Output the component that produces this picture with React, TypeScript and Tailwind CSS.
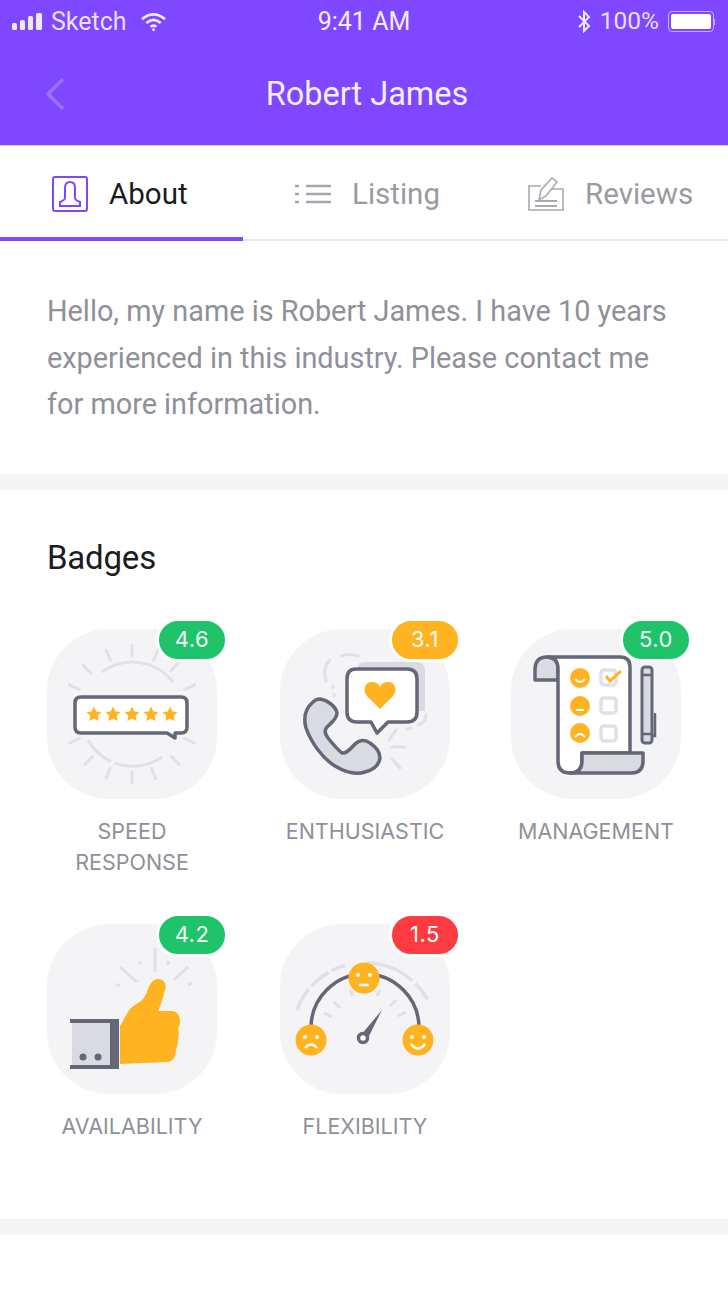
import { ReactNode } from 'react';

const DARK = '#646876';
const LIGHT = '#e0e1e7';
const FILL = '#d9dae2';
const ORANGE = '#ffb320';

const Rays = ({ angles }: { angles: number[] }) => (
  <>
    {angles.map(a => {
      const r = (a * Math.PI) / 180;
      return (
        <line
          key={a}
          x1={85 + Math.cos(r) * 58}
          y1={85 + Math.sin(r) * 58}
          x2={85 + Math.cos(r) * 69}
          y2={85 + Math.sin(r) * 69}
          stroke={LIGHT}
          strokeWidth="3"
          strokeLinecap="round"
        />
      );
    })}
  </>
);

const Star = ({ x }: { x: number }) => (
  <path
    transform={`translate(${x} 85)`}
    d="M0 -7.5 L2.3 -2.6 L7.5 -1.9 L3.7 1.8 L4.6 7 L0 4.5 L-4.6 7 L-3.7 1.8 L-7.5 -1.9 L-2.3 -2.6 Z"
    fill={ORANGE}
  />
);

const SpeedIcon = () => (
  <svg viewBox="0 0 170 170" className="w-full h-full">
    <path d="M55 43 A51.5 51.5 0 0 1 126 53" fill="none" stroke={LIGHT} strokeWidth="3" />
    <path d="M41 111 A51 51 0 0 0 115 128" fill="none" stroke={LIGHT} strokeWidth="3" strokeDasharray="32 4 80" />
    <Rays angles={[-90, -112, -135, -155, -25, -48, -68, 25, 47, 70, 90, 112, 133, 155]} />
    <path
      d="M34 68 H134 Q140 68 140 74 V98 Q140 104 134 104 H128 V109 L120 104 H34 Q28 104 28 98 V74 Q28 68 34 68 Z"
      fill="#fff"
      stroke={DARK}
      strokeWidth="3.5"
      strokeLinejoin="round"
    />
    {[47, 66, 85, 104, 123].map(x => (
      <Star key={x} x={x} />
    ))}
  </svg>
);

const CallIcon = () => (
  <svg viewBox="0 0 170 170" className="w-full h-full">
    <path d="M46 52 Q42 38 50 31 M62 27 Q70 24 78 27" fill="none" stroke={LIGHT} strokeWidth="3" strokeLinecap="round" />
    <path d="M53 56 V60 M54 64 V68" fill="none" stroke={LIGHT} strokeWidth="3" />
    <path d="M84 33 H136 Q145 33 145 42 V82 H78 V39 Q78 33 84 33 Z" fill={FILL} />
    <path d="M146 85 Q146 94 138 96 M131 99 L127 100" fill="none" stroke={LIGHT} strokeWidth="3" strokeLinecap="round" />
    <path d="M116 101 L109 111 M112 118 H125 M112 130 L120 139" fill="none" stroke={LIGHT} strokeWidth="3" strokeLinecap="round" />
    <path
      d="M76 40 H127 Q137 40 137 50 V83 Q137 93 127 93 H108 L97 104 L91 93 H77 Q67 93 67 83 V50 Q67 40 76 40 Z"
      fill="#fff"
      stroke={DARK}
      strokeWidth="3.5"
      strokeLinejoin="round"
    />
    <path
      d="M100 80 L87 67 C82 61 85 53 92 53 C96 53 99 55 100 58 C101 55 104 53 108 53 C115 53 118 61 113 67 Z"
      fill={ORANGE}
    />
    <path
      d="M40 70 C48 71 56 78 57 84 C57 90 51 94 47 98 C44 101 45 105 48 109 C52 114 57 120 62 124 C66 125 70 120 75 115 C79 111 85 110 90 114 C96 118 100 124 100 129 C99 136 93 141 85 143 C76 146 65 143 55 137 C42 129 31 113 26 99 C23 88 26 79 33 73 C35 71 38 70 40 70 Z"
      fill={FILL}
      stroke={DARK}
      strokeWidth="3.5"
      strokeLinejoin="round"
    />
  </svg>
);

const Box = ({ y }: { y: number }) => (
  <rect x="90" y={y - 7} width="15" height="15" rx="3" fill="none" stroke={LIGHT} strokeWidth="3.5" />
);

const ManagementIcon = () => (
  <svg viewBox="0 0 170 170" className="w-full h-full">
    <path d="M47 51 H24 V41 Q24 28 36 28 Q47 28 47 40 Z" fill={FILL} stroke={DARK} strokeWidth="3.5" strokeLinejoin="round" />
    <path d="M36 28 H109 Q119 28 119 38 V124 H71 V132 Q71 144 59 144 Q47 144 47 132 V40 Q47 28 36 28 Z" fill="#fff" stroke={DARK} strokeWidth="3.5" strokeLinejoin="round" />
    <path d="M71 124 H132 V132 Q132 144 120 144 H59 Q71 144 71 132 Z" fill={FILL} stroke={DARK} strokeWidth="3.5" strokeLinejoin="round" />
    <circle cx="69" cy="49" r="10" fill={ORANGE} />
    <circle cx="69" cy="77" r="10" fill={ORANGE} />
    <circle cx="69" cy="104" r="10" fill={ORANGE} />
    <path d="M64 50 Q69 56 74 50" fill="none" stroke="#fff" strokeWidth="2" />
    <path d="M65 81 H73" fill="none" stroke="#fff" strokeWidth="2" />
    <path d="M64 108 Q69 102 74 108" fill="none" stroke="#fff" strokeWidth="2" />
    <Box y={48} />
    <Box y={76} />
    <Box y={104} />
    <path d="M95 47 L99 52 L110 42" fill="none" stroke={ORANGE} strokeWidth="3" />
    <rect x="131" y="38" width="10" height="76" rx="3" fill={FILL} stroke={DARK} strokeWidth="3" />
    <path d="M131 46 H141 M131 105 H141 M144 84 V107 H141" fill="none" stroke={DARK} strokeWidth="2.5" />
  </svg>
);

const ThumbIcon = () => (
  <svg viewBox="0 0 170 170" className="w-full h-full">
    <path d="M108 24 V48 M73 43 L90 58 M127 56 L141 43" stroke={LIGHT} strokeWidth="3" fill="none" />
    <path d="M93 37 V41 M122 37 L120 41 M69 60 L73 62 M145 59 L141 61" stroke={LIGHT} strokeWidth="3" fill="none" />
    <rect x="25" y="97" width="46" height="46" fill={FILL} />
    <path d="M23 97 H68 M23 143 H71" stroke={DARK} strokeWidth="4" fill="none" />
    <rect x="63" y="95" width="9" height="50" fill={DARK} />
    <circle cx="36" cy="133" r="3.5" fill={DARK} />
    <circle cx="51" cy="133" r="3.5" fill={DARK} />
    <path
      d="M73 102 C78 94 81 86 86 82 C94 78 97 75 100 68 C102 62 105 55 111 55 C117 55 120 60 118 66 C116 74 114 80 111 87 H125 C130 87 133 92 133 97 C133 100 132 103 131 105 C132 108 132 112 131 114 C131 118 131 122 129 125 C129 131 127 138 120 138 L73 140 Z"
      fill={ORANGE}
    />
  </svg>
);

const FlexFace = ({ cx, cy, mouth }: { cx: number; cy: number; mouth: string }) => (
  <g>
    <circle cx={cx} cy={cy} r="15.5" fill={ORANGE} />
    <circle cx={cx - 6} cy={cy - 3} r="2" fill="#fff" />
    <circle cx={cx + 6} cy={cy - 3} r="2" fill="#fff" />
    <path d={mouth} fill="none" stroke="#fff" strokeWidth="2.5" />
  </g>
);

const FlexibilityIcon = () => (
  <svg viewBox="0 0 170 170" className="w-full h-full">
    <path d="M17 86 A72 72 0 0 1 153 88" fill="none" stroke={LIGHT} strokeWidth="3.5" strokeDasharray="24 4 22 4 14 22 50 4 20" />
    <path d="M44 89 L52 93 M54 78 L60 84 M70 66 L73 72 M100 66 L97 72 M116 76 L110 82 M126 88 L118 92" stroke={LIGHT} strokeWidth="3" fill="none" />
    <path d="M31 104 A54 54 0 0 1 139 104" fill="none" stroke={DARK} strokeWidth="3.5" />
    <FlexFace cx={84} cy={54} mouth="M79 61 H89" />
    <FlexFace cx={31} cy={116} mouth="M25 124 Q31 117 37 124" />
    <FlexFace cx={138} cy={116} mouth="M131 120 Q138 129 145 120" />
    <path d="M81 111 L102 86 L87 116 Z" fill={DARK} />
    <circle cx="83" cy="114" r="4.5" fill="#fff" stroke={DARK} strokeWidth="3.5" />
  </svg>
);

const badges: { label: ReactNode; score: string; color: string; icon: ReactNode }[] = [
  { label: <>SPEED<br />RESPONSE</>, score: '4.6', color: 'bg-[#1fc36a]', icon: <SpeedIcon /> },
  { label: 'ENTHUSIASTIC', score: '3.1', color: 'bg-[#ffb320]', icon: <CallIcon /> },
  { label: 'MANAGEMENT', score: '5.0', color: 'bg-[#1fc36a]', icon: <ManagementIcon /> },
  { label: 'AVAILABILITY', score: '4.2', color: 'bg-[#1fc36a]', icon: <ThumbIcon /> },
  { label: 'FLEXIBILITY', score: '1.5', color: 'bg-[#ff3b42]', icon: <FlexibilityIcon /> },
];

const StatusBar = () => (
  <div className="grid grid-cols-3 items-center h-[43px] pl-[12px] pr-[12px] text-[25px] text-[#e9dfff]">
    <div className="flex items-center whitespace-nowrap">
      <svg width="32" height="18" viewBox="0 0 32 18" fill="#eee8ff">
        <rect x="0" y="10" width="5" height="7" rx="1.5" />
        <rect x="8" y="7" width="5" height="10" rx="1.5" />
        <rect x="16" y="3" width="5" height="14" rx="1.5" />
        <rect x="24" y="0" width="6" height="17" rx="1.5" />
      </svg>
      <span className="ml-[7px]">Sketch</span>
      <svg width="27" height="20" viewBox="0 0 28 20" className="ml-[13px]" fill="none" stroke="#f0eaff" strokeWidth="2.8">
        <path d="M2 7 Q14 -3 26 7" />
        <path d="M6.5 11 Q14 4.5 21.5 11" />
        <path d="M11 15 Q14 12.5 17 15" />
        <circle cx="14" cy="18" r="1.5" fill="#f0eaff" stroke="none" />
      </svg>
    </div>
    <div className="text-center text-[#f3eeff] whitespace-nowrap">9:41 AM</div>
    <div className="flex items-center justify-end whitespace-nowrap">
      <svg width="14" height="23" viewBox="0 0 14 23" fill="none" stroke="#efe9ff" strokeWidth="2">
        <path d="M2 6 L12 16 L7 21 V2 L12 7 L2 17" />
      </svg>
      <span className="ml-[9px] text-[24.5px]">100%</span>
      <div className="flex items-center ml-[9px] mr-[1px]">
        <div className="w-[46px] h-[21px] rounded-[4px] border border-[#c7b0ff] p-[2px]">
          <div className="w-full h-full rounded-[2px] bg-white" />
        </div>
        <div className="w-[1px] h-[6px] bg-[#c7b0ff]" />
      </div>
    </div>
  </div>
);

const Tab = ({ icon, label, active, className }: { icon: ReactNode; label: string; active?: boolean; className: string }) => (
  <div className={`flex items-center h-full pt-[3px] ${className}`}>
    {icon}
    <span className={active ? 'text-[#1b1b20]' : 'text-[#9a9aa3]'}>{label}</span>
  </div>
);

export default function App() {
  return (
    <div className="w-[728px] h-[1296px] bg-white overflow-hidden font-['Roboto',sans-serif]">
      <div className="h-[146px] bg-[#7f47ff] border-b border-[#d9ccff]">
        <StatusBar />
        <div className="relative flex items-center justify-center h-[102px]">
          <svg width="24" height="34" viewBox="0 0 24 34" fill="none" stroke="#9a72ff" strokeWidth="3.5" className="absolute left-[43px] top-[34px]">
            <path d="M20 2 L5 17 L20 32" />
          </svg>
          <span className="text-[32.5px] text-[#f3eeff] pl-[6px]">Robert James</span>
        </div>
      </div>

      <div className="relative h-[95px] flex text-[29.5px] border-b-2 border-[#e9e9ee]">
        <Tab
          active
          label="About"
          className="w-[243px] pl-[52px]"
          icon={
            <svg width="36" height="36" viewBox="0 0 36 36" fill="none" stroke="#7f47ff" strokeWidth="2" className="mr-[21px]">
              <rect x="1" y="1" width="34" height="34" rx="2" />
              <path d="M13 22 V12 Q13 6 18 6 Q23 6 23 12 V22 Q23 24 28 26 V30 H8 V26 Q13 24 13 22 Z" />
            </svg>
          }
        />
        <Tab
          label="Listing"
          className="w-[241px] pl-[52px]"
          icon={
            <svg width="36" height="22" viewBox="0 0 36 22" fill="none" stroke="#a8a8b0" strokeWidth="2.5" className="mr-[21px]">
              <path d="M0 3 H4 M0 11 H4 M0 19 H4" />
              <path d="M11 3 H36 M11 11 H36 M11 19 H36" />
            </svg>
          }
        />
        <Tab
          label="Reviews"
          className="flex-1 pl-[44px]"
          icon={
            <svg width="36" height="36" viewBox="0 0 36 36" fill="none" stroke="#a8a8b0" strokeWidth="1.6" className="mr-[21px]">
              <path d="M13 10 H1 V34 H35 V13 H24" />
              <path d="M11 24 L13 14 L24 2 L29 6 L18 20 Z" />
              <path d="M7 25 H29 M7 30 H29" strokeWidth="2.2" />
            </svg>
          }
        />
        <div className="absolute left-0 bottom-[-2px] w-[243px] h-[4px] bg-[#7f47ff]" />
      </div>

      <p className="px-[47px] pt-[47px] pb-[46px] text-[28.85px] leading-[46.5px] text-[#8f9099]">
        Hello, my name is Robert James. I have 10 years experienced in this industry. Please contact me for more information.
      </p>

      <div className="h-[16px] bg-[#f5f5f6]" />

      <div className="px-[47px] pt-[48px] h-[729px]">
        <h2 className="text-[33px] leading-[40px] tracking-[-0.2px] text-[#1b1b20]">Badges</h2>
        <div className="grid grid-cols-[233px_231px_170px] gap-y-[46px] mt-[51px]">
          {badges.map(b => (
            <div key={b.score} className="w-[170px] flex flex-col items-center">
              <div className="relative w-[170px] h-[170px] rounded-[62px] bg-[#f4f4f6]">
                {b.icon}
                <div className={`absolute top-[-11px] right-[-11px] w-[72px] h-[44px] flex items-center justify-center rounded-full border-[3px] border-white text-[22px] text-[#f2fff8] tracking-[0.5px] font-['Inter',sans-serif] ${b.color}`}>
                  {b.score}
                </div>
              </div>
              <div className="mt-[17px] min-h-[62px] text-center text-[21.5px] leading-[31px] whitespace-nowrap text-[#8f9099] font-['Inter',sans-serif]">
                {b.label}
              </div>
            </div>
          ))}
        </div>
      </div>

      <div className="h-[16px] bg-[#f5f5f6]" />
    </div>
  );
}
